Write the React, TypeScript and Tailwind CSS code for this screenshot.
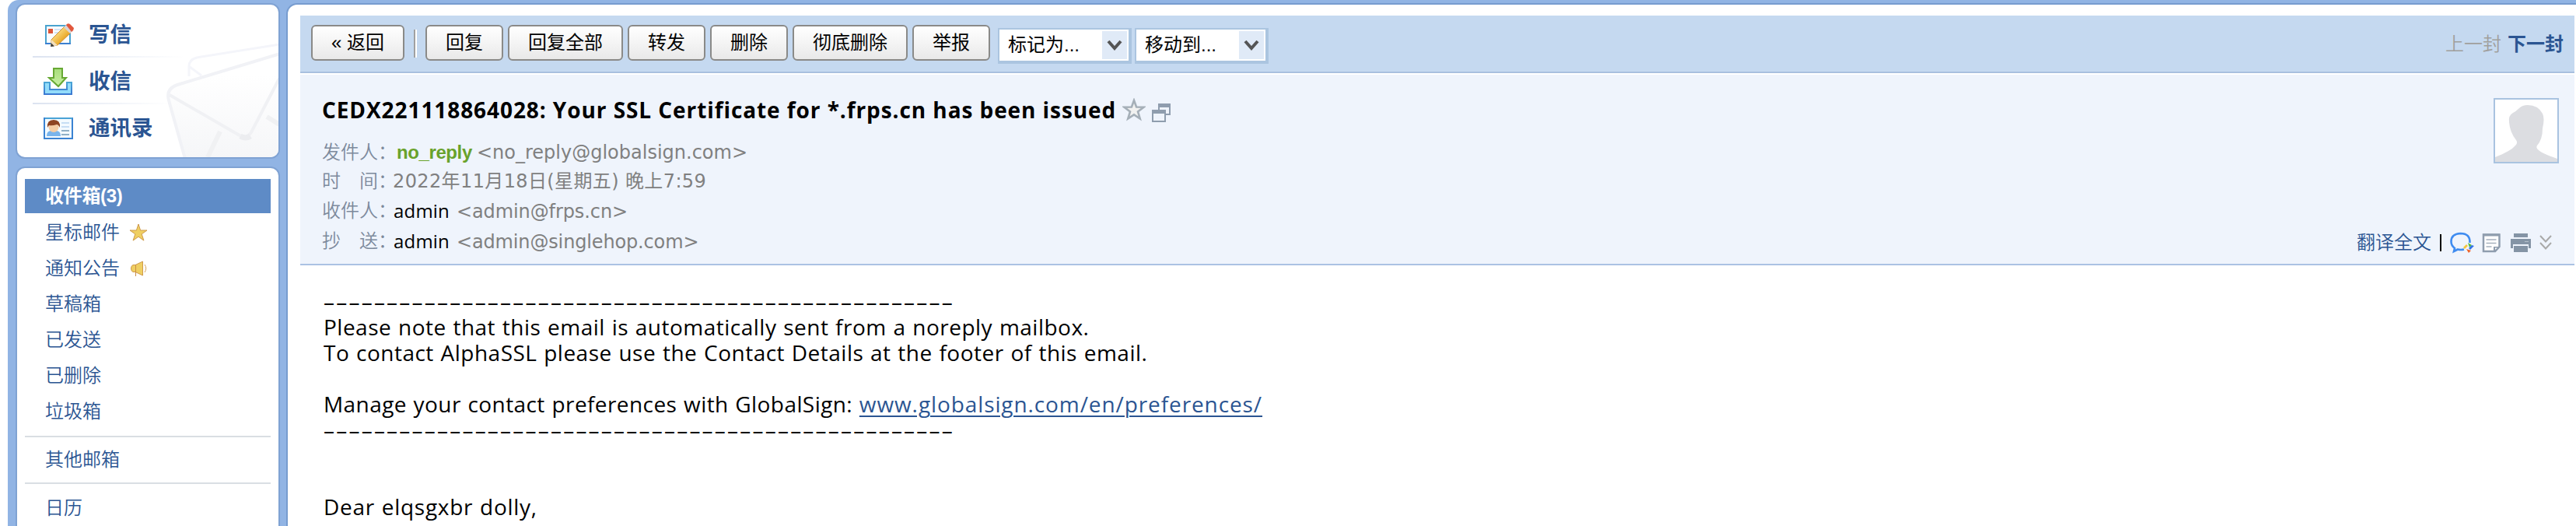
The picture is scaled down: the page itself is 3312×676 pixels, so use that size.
import React from "react";

const folders = [
  { name: "星标邮件", icon: <FolderStar /> },
  { name: "通知公告", icon: <Speaker /> },
  { name: "草稿箱" },
  { name: "已发送" },
  { name: "已删除" },
  { name: "垃圾箱" },
];

const sans = "font-['Liberation_Sans','Noto_Sans_CJK_SC',sans-serif]";
const lucida = "font-['Open_Sans','Noto_Sans_CJK_SC',sans-serif]";
const verdana = "font-['DejaVu_Sans','Noto_Sans_CJK_SC',sans-serif]";

function ComposeIcon() {
  return (
    <svg width="40" height="32" viewBox="0 0 40 32">
      <defs>
        <linearGradient id="pen" x1="0" y1="0" x2="1" y2="1">
          <stop offset="0.25" stopColor="#fbe08a" />
          <stop offset="0.7" stopColor="#e8a21c" />
        </linearGradient>
      </defs>
      <rect x="3" y="4" width="31" height="23" fill="#fafdff" stroke="#4aa3cf" strokeWidth="2" />
      <path d="M2 27h33" stroke="#3b7fd0" strokeWidth="2" />
      <rect x="6" y="8" width="6" height="6" fill="#dd5538" />
      <path d="M14 9h9M14 13h6" stroke="#c9dcf2" strokeWidth="1.5" />
      <path d="M10 22L27 5l8 8L18 29l-8 1z" fill="url(#pen)" stroke="#cf8d2c" strokeWidth="1" />
      <path d="M10 22l8 7-8 2z" fill="#f3dfbd" />
      <path d="M10 26.500l4 4-5 .5z" fill="#3a3a3a" />
      <path d="M26 6l3-3 8 8-3 3z" fill="#d9d4d6" />
      <path d="M29 3q2-3 5-1l5 5q0 3-3 5z" fill="#e2573c" />
    </svg>
  );
}

function InboxIcon() {
  return (
    <svg width="40" height="36" viewBox="0 0 40 36">
      <defs>
        <linearGradient id="arrow" x1="0" y1="0" x2="0" y2="1">
          <stop offset="0" stopColor="#a7dc7a" />
          <stop offset="1" stopColor="#c9f0a2" />
        </linearGradient>
        <linearGradient id="tray" x1="0" y1="0" x2="0" y2="1">
          <stop offset="0" stopColor="#4aa6d6" />
          <stop offset="1" stopColor="#3b79d2" />
        </linearGradient>
      </defs>
      <path d="M1 19h7v9h22v-9h6v15H1z" fill="#93dcfa" stroke="url(#tray)" strokeWidth="2" />
      <path d="M13 1h11v12h5L19 24 7 13h6z" fill="url(#arrow)" stroke="#67a834" strokeWidth="2" />
    </svg>
  );
}

function ContactsIcon() {
  return (
    <svg width="40" height="30" viewBox="0 0 40 30">
      <rect x="1" y="2" width="36" height="26" fill="#f3faff" stroke="#3b83d2" strokeWidth="2" />
      <path d="M2 2h35" stroke="#4aa3d6" strokeWidth="2" />
      <path d="M4 25q0-7 6-7h6q6 0 6 7z" fill="#79b4ec" />
      <ellipse cx="13" cy="13" rx="6.500" ry="7" fill="#f4cda6" />
      <path d="M5 14Q4 4 13 4t8 10q-2-4-4-4-6 2-10 1z" fill="#8e4423" />
      <path d="M23 8h10M23 13h10" stroke="#c6def4" strokeWidth="2" />
      <path d="M23 18h10M23 23h10" stroke="#91b0c6" strokeWidth="2" />
    </svg>
  );
}

function FolderStar() {
  return (
    <svg width="24" height="24" viewBox="0 0 24 24">
      <path
        d="M12 1l2.600 8H23l-6.800 4.800 2.700 8.300L12 17.200l-6.900 4.900 2.700-8.300L1 9h8.400z"
        fill="#efcf62"
        stroke="#cf9a4b"
      />
    </svg>
  );
}

function Speaker() {
  return (
    <svg width="24" height="24" viewBox="0 0 24 24">
      <path d="M8 7.500L17.500 3v18L8 16.500H5q-2.500-1-2.500-4.500T5 7.500z" fill="#efcf62" stroke="#cf9a4b" />
      <path d="M8.500 7.500V22" stroke="#c98d45" />
      <path d="M20 7q3.500 5 0 10" fill="none" stroke="#d6a65f" />
    </svg>
  );
}

function Envelopes() {
  return (
    <svg className="absolute inset-0" width="336" height="196" viewBox="22 6 336 196">
      <defs>
        <linearGradient id="paper" x1="0" y1="0" x2="0" y2="1">
          <stop offset="0.2" stopColor="#fff" />
          <stop offset="1" stopColor="#f5f6f8" />
        </linearGradient>
      </defs>
      <g fill="none" stroke="#f4f5fa" strokeWidth="3">
        <path d="M243 98v-13q0-8 10-11l106-17" />
        <path d="M244 86l15 11" />
      </g>
      <path
        d="M238 204l-21-75q-4-15 11-20L360 69v135z"
        fill="url(#paper)"
        stroke="#f1f2f6"
        strokeWidth="4"
      />
      <path d="M218 122l90 52q9 5 15-4l36-69" fill="none" stroke="#f0f1f4" strokeWidth="4" />
      <path d="M309 175q7 4 13 0" stroke="#ecedf0" strokeWidth="7" fill="none" />
      <path d="M283 169l-16 33M343 150l16 10" stroke="#f0f1f3" strokeWidth="6" />
    </svg>
  );
}

function Avatar() {
  return (
    <svg width="80" height="80" viewBox="0 0 80 80">
      <path
        d="M0 80v-6q20-8 25-14 5-4 2-8-8-10-9-23-1-9 5-12 4-2 8-6 4-4 11-4 13 0 19 11 3 6 0 19 0 14-7 22-2 3 2 6 4 4 24 11v4z"
        fill="#dcdde1"
      />
    </svg>
  );
}

function SubjectIcons() {
  return (
    <>
      <svg className="ml-2" width="30" height="30" viewBox="0 0 30 30">
        <path
          d="M15 3l3.100 8.500 9.400.3-7.500 5.600 2.700 9.100L15 21.300l-7.700 5.200 2.700-9.100-7.500-5.600 9.400-.3z"
          fill="#f1f1f0"
          stroke="#a5afb8"
          strokeWidth="2.600"
        />
      </svg>
      <svg className="ml-2 mt-2" width="24" height="24" viewBox="0 0 24 24">
        <path d="M9 8V1h14v13h-6" fill="none" stroke="#8f9dae" strokeWidth="2" />
        <path d="M8 0h16v5H8zM0 8h18v5H0z" fill="#8f9dae" />
        <path d="M1 9h16v14H1z" fill="none" stroke="#8f9dae" strokeWidth="2" />
      </svg>
    </>
  );
}

function HeaderTools() {
  return (
    <>
      <svg width="32" height="28" viewBox="0 0 32 28">
        <path
          d="M25.500 14Q26 2 13.500 2 1.500 2.500 1.500 12.500q0 5 4.500 8.500l-1 4 5-2.500q4 1 8 0"
          fill="none"
          stroke="#3f8cf0"
          strokeWidth="2.600"
        />
        <path d="M23 14l5 3-3 3z" fill="#56b83c" />
        <path d="M31 18l-5 5-2-2 4-4z" fill="#3474e8" />
        <path d="M21 22l6 2-3 3z" fill="#ee6428" />
        <path d="M17 20l4-4 2 2-4 4z" fill="#f6c63b" />
      </svg>
      <svg className="ml-[9px]" width="24" height="26" viewBox="0 0 24 26">
        <path d="M2 2.500h20.500V18L17 24H2z" fill="#fff" stroke="#8f9dae" strokeWidth="2.500" />
        <path d="M1 1.500h22v3H1zM15 25v-7h8z" fill="#8f9dae" />
        <path d="M17 22v-2.500h3z" fill="#fff" />
        <path d="M5.500 9h13M5.500 13.500h13M5.500 18h7" stroke="#a5b0bd" strokeWidth="1.500" />
      </svg>
      <svg className="ml-[13px]" width="26" height="26" viewBox="0 0 26 26">
        <path d="M4 1h18v5H4zM0 8h26v12h-3v-5H3v5H0zM4 17h18v8H4z" fill="#8494a5" />
        <path d="M18 11.500h5" stroke="#b4bfca" />
      </svg>
      <svg className="ml-[11px]" width="16" height="24" viewBox="0 0 16 24">
        <path d="M1 3l7 7.500L15 3M1 12l7 7.500 7-7.500" fill="none" stroke="#a9a9a9" strokeWidth="2" />
      </svg>
    </>
  );
}

function Sidebar() {
  return (
    <aside className={`w-[358px] shrink-0 pl-3 pr-[10px] pt-1.5 ${sans} text-[#2b5592]`}>
      <div className="relative h-[196px] overflow-hidden rounded-[10px] bg-white shadow-[0_0_0_2px_#7fa2d3]">
        <Envelopes />
        <nav className="relative flex flex-col pl-5 pt-2 text-[27.5px] leading-[58px] font-bold">
          <a className="flex h-[58px] items-center pt-[3px]">
            <span className="ml-3.5 w-[58px]"><ComposeIcon /></span>
            写信
          </a>
          <div className="h-0.5 w-[195px] bg-linear-to-r from-[#dce3f0] to-transparent" />
          <a className="flex h-[58px] items-center pt-[3px]">
            <span className="ml-3.5 w-[58px]"><InboxIcon /></span>
            收信
          </a>
          <div className="h-0.5 w-[175px] bg-linear-to-r from-[#dce3f0] to-transparent" />
          <a className="flex h-[58px] items-center pt-[3px]">
            <span className="ml-3.5 w-[58px]"><ContactsIcon /></span>
            通讯录
          </a>
        </nav>
      </div>

      <div className="mt-3.5 h-[480px] rounded-t-[10px] bg-white px-2.5 pt-3.5 text-2xl shadow-[0_0_0_2px_#7fa2d3]">
        <div className="mb-0.5 flex h-11 items-center bg-[#5e8bc6] pl-[26px] font-bold text-white">
          <span className="tracking-[-0.3px]">收件箱(3)</span>
        </div>
        {folders.map((f) => (
          <div key={f.name} className="flex h-[46px] items-center gap-3 pl-[26px] font-[350]">
            {f.name}
            {f.icon}
          </div>
        ))}
        <div className="mt-2 h-0.5 bg-[#d9dee3]" />
        <div className="mt-1.5 flex h-[46px] items-center pl-[26px] font-[350]">其他邮箱</div>
        <div className="mt-1.5 h-0.5 bg-[#d9dee3]" />
        <div className="mt-2 flex h-[46px] items-center pl-[26px] font-[350]">日历</div>
      </div>
    </aside>
  );
}

function ToolButton({ children }: { children: React.ReactNode }) {
  return (
    <button className="h-[46px] shrink-0 rounded-[6px] border-2 border-[#8a8a88] bg-linear-to-b from-white to-[#e9e9e9] px-6 text-2xl whitespace-pre text-black">
      {children}
    </button>
  );
}

function ToolSelect({ label }: { label: string }) {
  return (
    <div className="mt-1 flex h-[46px] w-[172px] items-center justify-between border-t-2 border-r-4 border-b-4 border-l-2 border-[#abc5e0] bg-white pr-0.5 pl-[11px] text-2xl text-black">
      <span>{label}</span>
      <span className="flex h-9 w-8 items-center justify-center bg-[#e0eaf7]">
        <svg width="20" height="14" viewBox="0 0 20 14">
          <path d="M2 2l8 9 8-9" fill="none" stroke="#555" strokeWidth="4" />
        </svg>
      </span>
    </div>
  );
}

function Toolbar() {
  return (
    <div className={`flex h-[74px] items-start border-b-2 border-[#a9c0df] bg-[#c5d9f0] pt-3 pl-3.5 ${sans}`}>
      <ToolButton>« 返回</ToolButton>
      <div className="mt-1.5 mr-[11px] ml-3 h-9 w-1 border-l-2 border-[#a0a0a0] bg-white" />
      <div className="flex gap-1.5">
        <ToolButton>回复</ToolButton>
        <ToolButton>回复全部</ToolButton>
        <ToolButton>转发</ToolButton>
        <ToolButton>删除</ToolButton>
        <ToolButton>彻底删除</ToolButton>
        <ToolButton>举报</ToolButton>
      </div>
      <div className="ml-2.5 flex gap-1">
        <ToolSelect label="标记为..." />
        <ToolSelect label="移动到..." />
      </div>
      <div className="mr-[14px] ml-auto flex gap-2 text-2xl leading-[49px]">
        <span className="font-[350] text-[#a09f9c]">上一封</span>
        <a className="font-bold text-[#2b5592]">下一封</a>
      </div>
    </div>
  );
}

function MetaLabel({ children }: { children: string }) {
  return <span className={`w-[91px] shrink-0 font-[350] text-[#7d8a9c] ${sans}`}>{children}</span>;
}

function MailHeader() {
  return (
    <header className="mt-0.5 flex h-[245px] justify-between border-b-2 border-[#abc2e3] bg-[#eff4fc] pl-7">
      <div className={`pt-6 text-2xl whitespace-nowrap text-[#808080] ${verdana}`}>
        <div className="flex h-10 items-center pt-px">
          <h1 className={`text-[28px] leading-10 font-bold tracking-[0.92px] text-black ${lucida}`}>
            CEDX221118864028: Your SSL Certificate for *.frps.cn has been issued
          </h1>
          <SubjectIcons />
        </div>
        <div className="mt-[17px] flex h-[37px] items-center">
          <MetaLabel>发件人：</MetaLabel>
          <b className={`ml-[5px] w-[103px] tracking-[-0.4px] text-[#69a22b] ${sans}`}>no_reply</b>
          <span>&lt;no_reply@globalsign.com&gt;</span>
        </div>
        <div className="flex h-[37px] items-center">
          <MetaLabel>时　间：</MetaLabel>
          <span className="tracking-[0.38px]">2022年11月18日(星期五) 晚上7:59</span>
        </div>
        <div className="flex h-[39px] items-center">
          <MetaLabel>收件人：</MetaLabel>
          <span className={`w-[82px] pl-px tracking-[0.2px] text-black ${lucida}`}>admin</span>
          <span className="pt-0.5 tracking-[-0.1px]">&lt;admin@frps.cn&gt;</span>
        </div>
        <div className="flex h-10 items-center">
          <MetaLabel>抄　送：</MetaLabel>
          <span className={`w-[82px] pl-px tracking-[0.2px] text-black ${lucida}`}>admin</span>
          <span className="pt-0.5 tracking-[-0.15px]">&lt;admin@singlehop.com&gt;</span>
        </div>
      </div>

      <div className={`flex flex-col items-end justify-between pt-[30px] pb-[13px] ${sans}`}>
        <div className="mr-5 size-[84px] border-2 border-[#a9c3e0] bg-white">
          <Avatar />
        </div>
        <div className="mr-[29px] flex items-center text-2xl leading-7">
          <a className="font-[350] text-[#2b5592]">翻译全文</a>
          <span className="mr-[11px] ml-[11px] h-[22px] w-0.5 bg-black" />
          <HeaderTools />
        </div>
      </div>
    </header>
  );
}

function MailBody() {
  const rule = "–".repeat(50);
  return (
    <div className={`pt-[30px] pl-[30px] text-[28px] leading-[33px] tracking-[0.49px] whitespace-nowrap text-black [word-spacing:1px] ${lucida}`}>
      <p className="tracking-[2.22px]">{rule}</p>
      <p>Please note that this email is automatically sent from a noreply mailbox.</p>
      <p>To contact AlphaSSL please use the Contact Details at the footer of this email.</p>
      <p className="mt-[33px] tracking-[0.42px]">
        Manage your contact preferences with GlobalSign:{" "}
        <a className="tracking-[0.9px] text-[#2b5592] underline decoration-2 underline-offset-4">
          www.globalsign.com/en/preferences/
        </a>
      </p>
      <p className="tracking-[2.22px]">{rule}</p>
      <p className="mt-[66px] tracking-[0.7px]">Dear elqsgxbr dolly,</p>
    </div>
  );
}

export default function App() {
  return (
    <div className="h-[676px] w-[3312px] overflow-hidden bg-white pl-2.5">
      <div className="flex h-full rounded-tl-[14px] bg-[#91b4e4]">
        <Sidebar />
        <main className="mt-1.5 ml-0.5 flex-1 rounded-tl-[12px] bg-white pt-3.5 pr-0.5 pl-4 shadow-[0_0_0_2px_#779ccf]">
          <Toolbar />
          <MailHeader />
          <MailBody />
        </main>
      </div>
    </div>
  );
}
